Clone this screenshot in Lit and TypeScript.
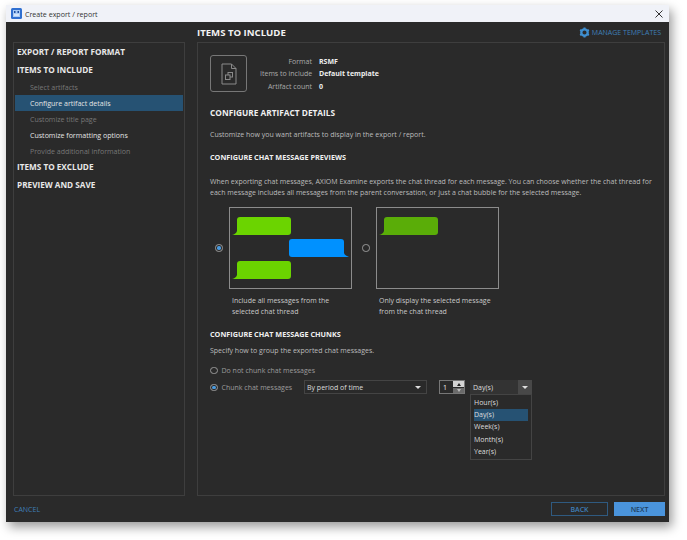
import { LitElement, html, css, svg } from 'lit';
import { customElement } from 'lit/decorators.js';

const bubble = (x: number, y: number, fill: string, right = false) => {
  // tail sits on the bottom outer corner of the bubble
  return right
    ? svg`<path fill=${fill} d="M${x + 3} ${y}h50a3 3 0 0 1 3 3v11q0 2 5 4h-57a3 3 0 0 1-3-3v-12a3 3 0 0 1 3-3z"/>`
    : svg`<path fill=${fill} d="M${x + 5} ${y}h49a3 3 0 0 1 3 3v12a3 3 0 0 1-3 3h-56q4-1 5-4v-11a3 3 0 0 1 3-3z"/>`;
};

@customElement('app-root')
export class AppRoot extends LitElement {
  static styles = css`
    :host {
      display: block;
      width: 687px;
      height: 540px;
      background: #fff;
      font-family: 'Open Sans', sans-serif;
      font-size: 7px;
      color: #c9c9c9;
      padding: 5px 18px 18px 6px;
      box-sizing: border-box;
    }
    * {
      box-sizing: border-box;
    }
    .window {
      height: 517px;
      display: flex;
      flex-direction: column;
      background: #2a2a2a;
      box-shadow: 3px 5px 10px rgba(0, 0, 0, 0.4);
    }
    .titlebar {
      height: 17px;
      flex: none;
      background: #f0f2f8;
      display: flex;
      align-items: center;
      padding: 0 6px 0 5px;
      gap: 3px;
      color: #333;
      font-size: 7.1px;
    }
    .titlebar .close {
      margin-left: auto;
    }
    .body {
      flex: 1;
      display: grid;
      grid-template-columns: 172px minmax(0, 1fr);
      grid-template-rows: 20px 454px 1fr;
      column-gap: 12px;
      padding: 0 4px 0 7px;
    }
    .pane-head {
      grid-column: 2;
      grid-row: 1;
      display: flex;
      align-items: center;
      justify-content: space-between;
      padding-right: 4px;
    }
    .pane-title {
      font-size: 9.6px;
      font-weight: 700;
      color: #f2f2f2;
    }
    .manage {
      display: flex;
      align-items: center;
      gap: 2px;
      color: #3f7fb8;
      font-size: 7px;
    }
    .nav {
      grid-column: 1;
      grid-row: 2;
      border: 1px solid #3e3e3e;
      padding: 1px;
      display: flex;
      flex-direction: column;
    }
    .nav-top {
      height: 18px;
      flex: none;
      display: flex;
      align-items: center;
      padding-left: 2px;
      font-size: 8.2px;
      font-weight: 700;
      color: #e8e8e8;
    }
    .nav-top.first {
      margin-top: -2px;
    }
    .nav-top.above-subs {
      margin-bottom: 1px;
    }
    .nav-top.tight {
      margin-top: -2px;
    }
    .nav-sub {
      height: 16px;
      flex: none;
      display: flex;
      align-items: center;
      padding-left: 15px;
      font-size: 7.05px;
      color: #777;
    }
    .nav-sub.active {
      background: #265273;
      color: #e4e4e4;
    }
    .nav-sub.on {
      color: #e4e4e4;
    }
    .main {
      grid-column: 2;
      grid-row: 2;
      border: 1px solid #3e3e3e;
      padding: 12px 12px 0 12px;
      display: flex;
      flex-direction: column;
    }
    .summary {
      display: flex;
      gap: 13px;
      height: 37px;
    }
    .file-box {
      width: 37px;
      height: 37px;
      flex: none;
      border: 1px solid #777;
      border-radius: 3px;
      display: flex;
      align-items: center;
      justify-content: center;
    }
    .meta {
      display: grid;
      grid-template-columns: 52px auto;
      grid-auto-rows: 12.5px;
      column-gap: 7px;
      align-content: center;
      align-items: center;
      white-space: nowrap;
    }
    .meta .k {
      text-align: right;
      color: #aaa;
    }
    .meta .v {
      color: #eee;
      font-weight: 700;
    }
    h2 {
      margin: 15px 0 0;
      font-size: 8.3px;
      line-height: 12px;
      font-weight: 700;
      color: #f0f0f0;
    }
    h3 {
      margin: 0;
      font-size: 7.25px;
      line-height: 10px;
      font-weight: 700;
      color: #f0f0f0;
    }
    p {
      margin: 0;
      line-height: 10.4px;
      color: #bcbcbc;
      white-space: nowrap;
    }
    .intro {
      margin: 11px 0 12px;
    }
    .lead {
      margin: 15px 0 9px;
    }
    .previews {
      display: flex;
      gap: 5px;
    }
    .preview {
      display: flex;
      align-items: flex-start;
      gap: 6px;
    }
    .radio-col {
      width: 8px;
      height: 82px;
      display: flex;
      align-items: center;
      margin-left: 5px;
    }
    .radio {
      width: 7.5px;
      height: 7.5px;
      border-radius: 50%;
      border: 1px solid #999;
      flex: none;
      display: flex;
      align-items: center;
      justify-content: center;
    }
    .radio.on::after {
      content: '';
      width: 3.5px;
      height: 3.5px;
      border-radius: 50%;
      background: #4a9be0;
    }
    .shot {
      display: block;
      width: 123px;
      height: 82px;
      border: 1px solid #8c8c8c;
    }
    .caption {
      margin: 7px 0 0 3px;
      color: #c9c9c9;
    }
    .chunks-title {
      margin-top: 12px;
    }
    .specify {
      margin: 7px 0 9px;
    }
    .opt {
      display: flex;
      align-items: center;
      gap: 4px;
      color: #9c9c9c;
      height: 10px;
    }
    .chunk-row {
      display: flex;
      align-items: center;
      height: 14px;
      margin-top: 5px;
    }
    .chunk-row .opt {
      width: 94px;
    }
    .select {
      width: 123px;
      height: 14px;
      border: 1px solid #444;
      display: flex;
      align-items: center;
      padding: 0 5px 0 2px;
      justify-content: space-between;
      color: #ddd;
    }
    .caret {
      width: 0;
      height: 0;
      border-left: 3px solid transparent;
      border-right: 3px solid transparent;
      border-top: 3px solid #ddd;
    }
    .spinner {
      margin-left: 12px;
      width: 26px;
      height: 14px;
      border: 1px solid #777;
      display: flex;
      align-items: center;
      justify-content: space-between;
      padding-left: 3px;
      color: #eee;
    }
    .spin-btns {
      width: 11px;
      height: 12px;
      display: flex;
      flex-direction: column;
      gap: 1px;
    }
    .spin-btns span {
      flex: 1;
      background: #d4d4d4;
      display: flex;
      align-items: center;
      justify-content: center;
    }
    .spin-btns span + span {
      background: #6a6a6a;
    }
    .up {
      width: 0;
      height: 0;
      border-left: 2.5px solid transparent;
      border-right: 2.5px solid transparent;
      border-bottom: 3px solid #222;
    }
    .down {
      width: 0;
      height: 0;
      border-left: 2.5px solid transparent;
      border-right: 2.5px solid transparent;
      border-top: 3px solid #bbb;
    }
    .unit {
      position: relative;
      margin-left: 5px;
      width: 62px;
      height: 14px;
      background: #333;
      display: flex;
      align-items: center;
      justify-content: space-between;
      padding: 0 4px 0 3px;
      color: #ddd;
    }
    .unit .arrow {
      background: #484848;
      height: 14px;
      width: 14px;
      margin-right: -4px;
      display: flex;
      align-items: center;
      justify-content: center;
    }
    .menu {
      position: absolute;
      left: 0;
      top: 14px;
      width: 62px;
      height: 66px;
      background: #2a2a2a;
      border: 1px solid #444;
      padding: 1px 3px;
      color: #ddd;
    }
    .menu div {
      height: 12.2px;
      display: flex;
      align-items: center;
    }
    .menu .sel {
      background: #265273;
    }
    .foot {
      grid-column: 1 / 3;
      grid-row: 3;
      display: flex;
      align-items: center;
      gap: 6px;
    }
    .cancel {
      margin-left: 1px;
      margin-right: auto;
      color: #3f7fb8;
      font-size: 7px;
    }
    .btn {
      height: 14px;
      display: flex;
      align-items: center;
      justify-content: center;
      font-size: 7px;
      font-weight: 600;
      color: #3f7fb8;
    }
    .btn.back {
      width: 57px;
      border: 1px solid #2f5a80;
    }
    .btn.next {
      width: 51px;
      background: #4a94dc;
      color: #1f3f60;
    }
  `;

  render() {
    return html`
      <div class="window">
        <div class="titlebar">
          <svg width="11" height="11" viewBox="0 0 11 11">
            <rect width="11" height="11" rx="1.500" fill="#2f6fd0" />
            <rect x="2" y="2" width="7" height="7" fill="#a9cbf5" />
            <rect x="3" y="3" width="1.500" height="2" fill="#1f4fa0" />
            <rect x="6.500" y="3" width="1.500" height="2" fill="#1f4fa0" />
            <rect x="3" y="6.500" width="5" height="1" fill="#fff" />
          </svg>
          <span>Create export / report</span>
          <svg class="close" width="8" height="8" viewBox="0 0 8 8">
            <path d="M.5.5l7 7M7.500.5l-7 7" stroke="#333" stroke-width="1" fill="none" />
          </svg>
        </div>
        <div class="body">
          <div class="pane-head">
            <span class="pane-title">ITEMS TO INCLUDE</span>
            <span class="manage">
              <svg width="11" height="11" viewBox="0 0 24 24" fill="none" stroke="#3f8fd0">
                <circle cx="12" cy="12" r="7" stroke-width="5" />
                <path
                  stroke-width="4.500"
                  d="M12 1v4M12 19v4M2.500 6.500l3.500 2M18 15.500l3.500 2M2.500 17.500l3.500-2M18 8.500l3.500-2"
                />
              </svg>
              MANAGE TEMPLATES
            </span>
          </div>

          <div class="nav">
            <div class="nav-top first">EXPORT / REPORT FORMAT</div>
            <div class="nav-top above-subs">ITEMS TO INCLUDE</div>
            <div class="nav-sub">Select artifacts</div>
            <div class="nav-sub active">Configure artifact details</div>
            <div class="nav-sub">Customize title page</div>
            <div class="nav-sub on">Customize formatting options</div>
            <div class="nav-sub">Provide additional information</div>
            <div class="nav-top tight">ITEMS TO EXCLUDE</div>
            <div class="nav-top">PREVIEW AND SAVE</div>
          </div>

          <div class="main">
            <div class="summary">
              <div class="file-box">
                <svg width="16" height="22" viewBox="0 0 16 22" fill="none" stroke="#8a8a8a" stroke-width="1">
                  <path d="M1 1h9.500L15 5.500V21H1z" />
                  <path d="M10.500 1v4.500H15" />
                  <rect x="7" y="9.500" width="4.500" height="4.500" />
                  <rect x="4.500" y="12" width="4.500" height="4.500" fill="#2a2a2a" />
                </svg>
              </div>
              <div class="meta">
                <span class="k">Format</span><span class="v">RSMF</span>
                <span class="k">Items to include</span><span class="v">Default template</span>
                <span class="k">Artifact count</span><span class="v">0</span>
              </div>
            </div>

            <h2>CONFIGURE ARTIFACT DETAILS</h2>
            <p class="intro">Customize how you want artifacts to display in the export / report.</p>
            <h3>CONFIGURE CHAT MESSAGE PREVIEWS</h3>
            <p class="lead">
              When exporting chat messages, AXIOM Examine exports the chat thread for each message. You can choose whether the chat thread for<br />
              each message includes all messages from the parent conversation, or just a chat bubble for the selected message.
            </p>

            <div class="previews">
              <div class="preview">
                <div class="radio-col"><span class="radio on"></span></div>
                <div>
                  <svg class="shot" viewBox="0 0 121 80">
                    ${bubble(4, 9, '#6bd400')}
                    ${bubble(58, 31, '#0091ff', true)}
                    ${bubble(4, 53, '#6bd400')}
                  </svg>
                  <p class="caption">Include all messages from the<br />selected chat thread</p>
                </div>
              </div>
              <div class="preview">
                <div class="radio-col"><span class="radio"></span></div>
                <div>
                  <svg class="shot" viewBox="0 0 121 80">${bubble(4, 9, '#5aad08')}</svg>
                  <p class="caption">Only display the selected message<br />from the chat thread</p>
                </div>
              </div>
            </div>

            <h3 class="chunks-title">CONFIGURE CHAT MESSAGE CHUNKS</h3>
            <p class="specify">Specify how to group the exported chat messages.</p>
            <div class="opt"><span class="radio"></span>Do not chunk chat messages</div>
            <div class="chunk-row">
              <div class="opt"><span class="radio on"></span>Chunk chat messages</div>
              <div class="select">By period of time<span class="caret"></span></div>
              <div class="spinner">
                1
                <div class="spin-btns">
                  <span><i class="up"></i></span>
                  <span><i class="down"></i></span>
                </div>
              </div>
              <div class="unit">
                Day(s)
                <span class="arrow"><span class="caret"></span></span>
                <div class="menu">
                  <div>Hour(s)</div>
                  <div class="sel">Day(s)</div>
                  <div>Week(s)</div>
                  <div>Month(s)</div>
                  <div>Year(s)</div>
                </div>
              </div>
            </div>
          </div>

          <div class="foot">
            <span class="cancel">CANCEL</span>
            <span class="btn back">BACK</span>
            <span class="btn next">NEXT</span>
          </div>
        </div>
      </div>
    `;
  }
}
